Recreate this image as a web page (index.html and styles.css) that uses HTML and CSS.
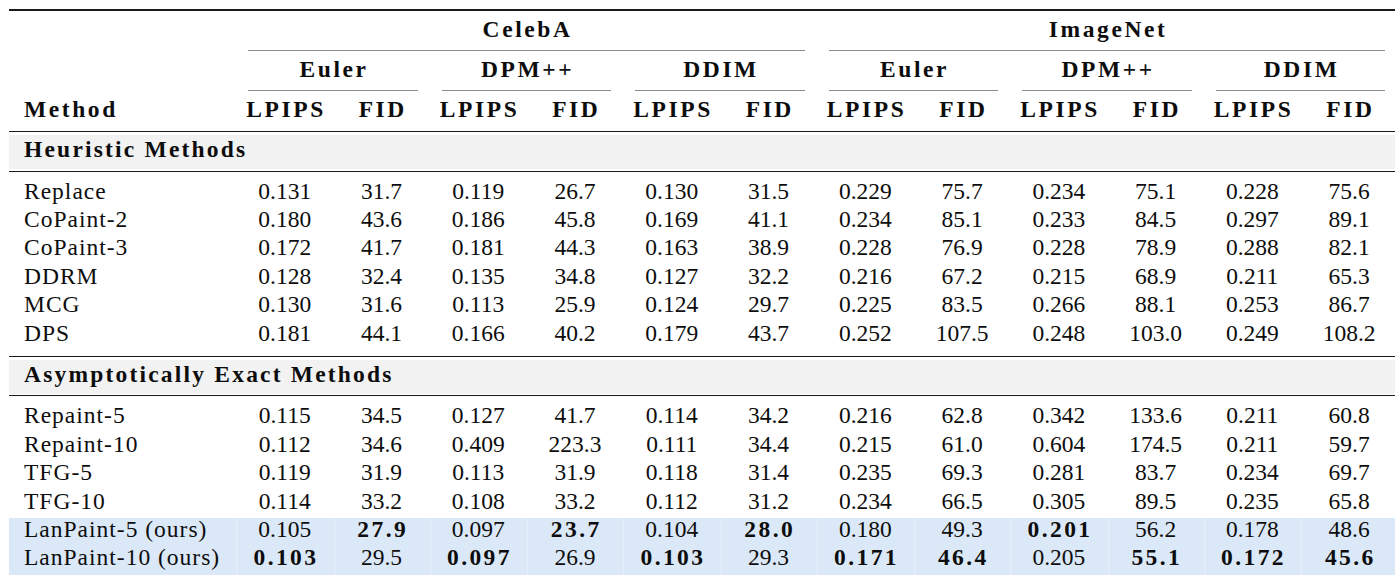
FILE: index.html
```html
<!DOCTYPE html>
<html lang="en">
<head>
<meta charset="utf-8">
<title>Inpainting results</title>
<link rel="stylesheet" href="styles.css">
</head>
<body>
<table class="results">
  <colgroup>
    <col class="c-method">
    <col class="c-lp"><col class="c-fid">
    <col class="c-lp"><col class="c-fid">
    <col class="c-lp"><col class="c-fid">
    <col class="c-lp"><col class="c-fid">
    <col class="c-lp"><col class="c-fid">
    <col class="c-lp"><col class="c-fid">
  </colgroup>
  <thead>
    <tr class="hrow top">
      <th></th>
      <th colspan="6" class="grp"><div class="rule">CelebA</div></th>
      <th colspan="6" class="grp"><div class="rule">ImageNet</div></th>
    </tr>
    <tr class="hrow">
      <th></th>
      <th colspan="2" class="grp"><div class="rule">Euler</div></th>
      <th colspan="2" class="grp"><div class="rule">DPM++</div></th>
      <th colspan="2" class="grp"><div class="rule">DDIM</div></th>
      <th colspan="2" class="grp"><div class="rule">Euler</div></th>
      <th colspan="2" class="grp"><div class="rule">DPM++</div></th>
      <th colspan="2" class="grp"><div class="rule">DDIM</div></th>
    </tr>
    <tr class="hrow metric">
      <th class="method">Method</th>
      <th>LPIPS</th><th>FID</th>
      <th>LPIPS</th><th>FID</th>
      <th>LPIPS</th><th>FID</th>
      <th>LPIPS</th><th>FID</th>
      <th>LPIPS</th><th>FID</th>
      <th>LPIPS</th><th>FID</th>
    </tr>
  </thead>
  <tbody>
    <tr class="sec"><td colspan="13"><div class="band">Heuristic Methods</div></td></tr>
    <tr class="first"><td class="method">Replace</td><td>0.131</td><td>31.7</td><td>0.119</td><td>26.7</td><td>0.130</td><td>31.5</td><td>0.229</td><td>75.7</td><td>0.234</td><td>75.1</td><td>0.228</td><td>75.6</td></tr>
    <tr><td class="method">CoPaint-2</td><td>0.180</td><td>43.6</td><td>0.186</td><td>45.8</td><td>0.169</td><td>41.1</td><td>0.234</td><td>85.1</td><td>0.233</td><td>84.5</td><td>0.297</td><td>89.1</td></tr>
    <tr><td class="method">CoPaint-3</td><td>0.172</td><td>41.7</td><td>0.181</td><td>44.3</td><td>0.163</td><td>38.9</td><td>0.228</td><td>76.9</td><td>0.228</td><td>78.9</td><td>0.288</td><td>82.1</td></tr>
    <tr><td class="method">DDRM</td><td>0.128</td><td>32.4</td><td>0.135</td><td>34.8</td><td>0.127</td><td>32.2</td><td>0.216</td><td>67.2</td><td>0.215</td><td>68.9</td><td>0.211</td><td>65.3</td></tr>
    <tr><td class="method">MCG</td><td>0.130</td><td>31.6</td><td>0.113</td><td>25.9</td><td>0.124</td><td>29.7</td><td>0.225</td><td>83.5</td><td>0.266</td><td>88.1</td><td>0.253</td><td>86.7</td></tr>
    <tr class="last"><td class="method">DPS</td><td>0.181</td><td>44.1</td><td>0.166</td><td>40.2</td><td>0.179</td><td>43.7</td><td>0.252</td><td>107.5</td><td>0.248</td><td>103.0</td><td>0.249</td><td>108.2</td></tr>
    <tr class="sec"><td colspan="13"><div class="band">Asymptotically Exact Methods</div></td></tr>
    <tr class="first"><td class="method">Repaint-5</td><td>0.115</td><td>34.5</td><td>0.127</td><td>41.7</td><td>0.114</td><td>34.2</td><td>0.216</td><td>62.8</td><td>0.342</td><td>133.6</td><td>0.211</td><td>60.8</td></tr>
    <tr><td class="method">Repaint-10</td><td>0.112</td><td>34.6</td><td>0.409</td><td>223.3</td><td>0.111</td><td>34.4</td><td>0.215</td><td>61.0</td><td>0.604</td><td>174.5</td><td>0.211</td><td>59.7</td></tr>
    <tr><td class="method">TFG-5</td><td>0.119</td><td>31.9</td><td>0.113</td><td>31.9</td><td>0.118</td><td>31.4</td><td>0.235</td><td>69.3</td><td>0.281</td><td>83.7</td><td>0.234</td><td>69.7</td></tr>
    <tr><td class="method">TFG-10</td><td>0.114</td><td>33.2</td><td>0.108</td><td>33.2</td><td>0.112</td><td>31.2</td><td>0.234</td><td>66.5</td><td>0.305</td><td>89.5</td><td>0.235</td><td>65.8</td></tr>
    <tr class="ours"><td class="method">LanPaint-5 (ours)</td><td>0.105</td><td><b>27.9</b></td><td>0.097</td><td><b>23.7</b></td><td>0.104</td><td><b>28.0</b></td><td>0.180</td><td>49.3</td><td><b>0.201</b></td><td>56.2</td><td>0.178</td><td>48.6</td></tr>
    <tr class="ours"><td class="method">LanPaint-10 (ours)</td><td><b>0.103</b></td><td>29.5</td><td><b>0.097</b></td><td>26.9</td><td><b>0.103</b></td><td>29.3</td><td><b>0.171</b></td><td><b>46.4</b></td><td>0.205</td><td><b>55.1</b></td><td><b>0.172</b></td><td><b>45.6</b></td></tr>
  </tbody>
</table>
</body>
</html>
```
FILE: styles.css
```css
html, body {
  margin: 0;
  padding: 0;
  background: #ffffff;
  overflow: hidden;
}

body {
  padding: 9px 0 0 9px;
  font-family: "Liberation Serif", "Times New Roman", serif;
  font-size: 23.5px;
  color: #0d0d0d;
}

.results {
  table-layout: fixed;
  width: 1388px;
  border-collapse: separate;
  border-spacing: 0;
  border-top: 2px solid #1a1a1a;
}

.c-method { width: 227px; }
.c-lp { width: 97.5px; }
.c-fid { width: 96px; }

.results th,
.results td {
  padding: 0;
  text-align: center;
  vertical-align: top;
  white-space: nowrap;
}

/* header rows */
.results .hrow th {
  font-weight: 700;
  letter-spacing: 0.11em;
  text-indent: 0.11em;
  line-height: 37px;
}

.results .hrow th.grp {
  padding: 0 12px;
}

.hrow .rule {
  line-height: 37px;
  padding-bottom: 2px;
  border-bottom: 1px solid #8c8c8c;
}

.results .metric th {
  padding-bottom: 3px;
}

.results .method {
  text-align: left;
  padding-left: 15px;
}

.results .metric th.method {
  text-indent: 0;
}

/* section bands */
.results .sec td {
  border-top: 1.5px solid #1a1a1a;
  border-bottom: 1.5px solid #1a1a1a;
  padding: 3px 0 1.5px 0;
}

.band {
  background: #f2f2f2;
  line-height: 29px;
  padding: 0 0 5px 15px;
  text-align: left;
  font-weight: 700;
  letter-spacing: 2.2px;
}

/* data rows */
.results tbody td {
  line-height: 23.4px;
  padding-bottom: 5px;
}

.results tbody td.method {
  letter-spacing: 1px;
  padding-left: 15px;
}

.results tbody tr.first td {
  padding-top: 8px;
}

.results tbody tr.last td {
  padding-bottom: 11px;
}

.results tbody tr.sec td {
  padding: 3px 0 1.5px 0;
}

.results b {
  font-weight: 700;
  letter-spacing: 2.4px;
  margin-right: -2.4px;
}

.results .ours td {
  background: #dbe8f7;
  box-shadow: inset 1px 0 0 rgba(255, 255, 255, 0.35);
}

.results .ours td.method {
  box-shadow: none;
}
```
